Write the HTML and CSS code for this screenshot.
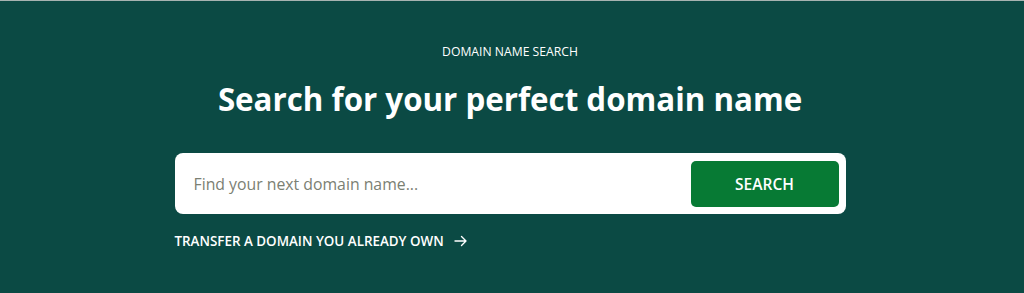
FILE: index.html
```html
<!DOCTYPE html>
<html lang="en">
<head>
  <meta charset="UTF-8" />
  <title>Domain Name Search</title>
  <meta name="viewport" content="width=device-width, initial-scale=1" />
  <link rel="stylesheet" href="styles.css">
</head>
<body>
  <section class="hero">
    <div class="container">
      <p class="eyebrow">DOMAIN NAME SEARCH</p>
      <h1>Search for your perfect domain name</h1>

      <form class="search-box" onsubmit="return false">
        <input type="text" placeholder="Find your next domain name..." />
        <button type="submit">SEARCH</button>
      </form>

      <a class="transfer-link" href="#">
        TRANSFER A DOMAIN YOU ALREADY OWN
        <svg width="13" height="12" viewBox="0 0 13 12" fill="none" stroke="#fff" stroke-width="1.4" stroke-linecap="round" stroke-linejoin="round">
          <path d="M1 6h11M7.5 1.5L12 6l-4.5 4.5" />
        </svg>
      </a>
    </div>
  </section>
</body>
</html>
```

FILE: styles.css
```css
* {
  box-sizing: border-box;
}
body {
  margin: 0;
  font-family: 'Open Sans', sans-serif;
  background: #0b4a44;
  border-top: 1px solid #a7b3b1;
  min-height: 100vh;
}
.hero {
  display: flex;
  justify-content: center;
  padding: 43px 4px 0 0;
}
.container {
  width: 671px;
  display: flex;
  flex-direction: column;
}
.eyebrow {
  margin: 0;
  text-align: center;
  color: #fff;
  font-size: 12.2px;
  line-height: 16px;
}
h1 {
  margin: 18px 0 0;
  text-align: center;
  color: #fff;
  font-size: 31.3px;
  font-weight: 700;
  line-height: 42px;
}
.search-box {
  margin-top: 33px;
  display: flex;
  align-items: center;
  height: 61px;
  padding: 7px;
  background: #fff;
  border-radius: 8px;
}
.search-box input {
  flex: 1;
  border: none;
  outline: none;
  padding: 0 12px;
  font-family: inherit;
  font-size: 15.8px;
  color: #333;
  background: transparent;
}
.search-box input::placeholder {
  color: #7b8073;
}
.search-box button {
  width: 148px;
  height: 46px;
  border: none;
  border-radius: 5px;
  background: #077a34;
  color: #fff;
  font-family: inherit;
  font-size: 15.5px;
  font-weight: 600;
  cursor: pointer;
}
.transfer-link {
  margin-top: 18px;
  display: flex;
  align-items: center;
  gap: 10px;
  color: #fff;
  font-size: 13.4px;
  font-weight: 600;
  text-decoration: none;
}
```
